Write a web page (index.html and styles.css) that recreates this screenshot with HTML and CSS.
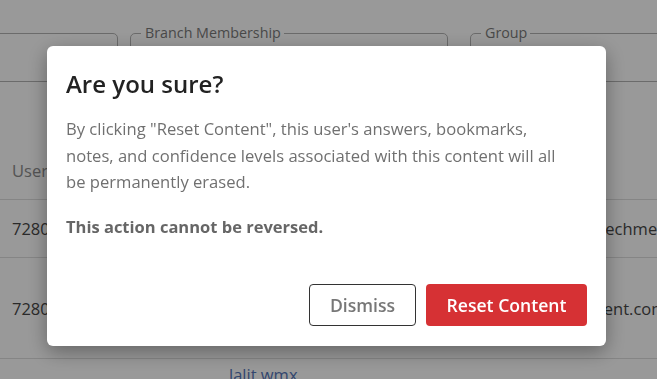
FILE: index.html
```html
<!DOCTYPE html>
<html lang="en">
<head>
    <meta charset="UTF-8">
    <meta name="viewport" content="width=device-width, initial-scale=1.0">
    <title>Reset Content</title>
    <link rel="stylesheet" href="styles.css">
</head>
<body>
    <!-- Page behind the dialog -->
    <div class="page">
        <div class="filters">
            <fieldset class="field field-first">
                <legend>Branch</legend>
            </fieldset>
            <fieldset class="field field-branch">
                <legend>Branch Membership</legend>
            </fieldset>
            <fieldset class="field field-group">
                <legend>Group</legend>
            </fieldset>
        </div>

        <table class="users">
            <tr class="head-row">
                <th class="col-id">User ID</th>
                <th class="col-name">Name</th>
                <th class="col-mail">Email</th>
            </tr>
            <tr class="row-short">
                <td class="col-id">72801</td>
                <td class="col-name">Content Admin</td>
                <td class="col-mail">content-admin1@techment.com</td>
            </tr>
            <tr class="row-tall">
                <td class="col-id">72802</td>
                <td class="col-name">Demo User</td>
                <td class="col-mail">demouser@techment.com</td>
            </tr>
            <tr class="row-last">
                <td class="col-id"></td>
                <td class="col-name"><a href="#">lalit wmx</a></td>
                <td class="col-mail"></td>
            </tr>
        </table>
    </div>

    <!-- Confirm dialog -->
    <div class="overlay">
        <div class="modal">
            <h2 class="modal-title">Are you sure?</h2>
            <p class="modal-text">By clicking "Reset Content", this user's answers, bookmarks, notes, and confidence levels associated with this content will all be permanently erased.</p>
            <p class="modal-warning">This action cannot be reversed.</p>
            <div class="modal-actions">
                <button class="dismiss-btn">Dismiss</button>
                <button class="reset-btn">Reset Content</button>
            </div>
        </div>
    </div>
</body>
</html>
```

FILE: styles.css
```css
body {
    margin: 0;
    height: 379px;
    overflow: hidden;
    font-family: "Open Sans", Arial, sans-serif;
    background-color: #ffffff;
}

.page {
    padding-top: 25px;
}

.filters {
    display: flex;
    margin-left: -100px;
}

.field {
    flex-shrink: 0;
    margin: 0;
    padding: 0;
    height: 55px;
    border: 1px solid #b3b3b3;
    border-radius: 5px;
}

.field legend {
    margin-left: 10px;
    padding: 0 3px 0 4px;
    font-size: 14.3px;
    line-height: 16px;
    color: #7a7a7a;
}

.field-first {
    width: 216px;
}

.field-branch {
    width: 316px;
    margin-left: 12px;
}

.field-group {
    width: 300px;
    margin-left: 22px;
}

.users {
    margin-top: 59px;
    width: 800px;
    table-layout: fixed;
    border-collapse: collapse;
    font-size: 16.5px;
    color: #474747;
}

.users th {
    text-align: left;
    font-weight: 400;
    color: #8c8c8c;
    height: 58px;
}

.users td,
.users th {
    padding: 0 0 0 12px;
    border-bottom: 1px solid #dedede;
    white-space: nowrap;
    overflow: hidden;
}

.users .col-mail {
    padding-left: 14px;
}

.row-short td {
    height: 57px;
}

.row-tall td {
    height: 100px;
}

.row-last td {
    border-bottom: none;
    vertical-align: top;
    padding-top: 4px;
}

.col-id {
    width: 205px;
}

.col-name {
    width: 219px;
}

.users a {
    color: #5475b8;
    text-decoration: none;
}

.overlay {
    position: fixed;
    top: 0;
    left: 0;
    width: 100%;
    height: 100%;
    background: rgba(0, 0, 0, 0.4);
}

.modal {
    margin: 46px 0 0 47px;
    width: 559px;
    height: 300px;
    box-sizing: border-box;
    padding: 20px 19px;
    display: flex;
    flex-direction: column;
    background-color: #ffffff;
    border-radius: 6px;
    box-shadow: 0 6px 20px rgba(0, 0, 0, 0.35);
}

.modal-title {
    margin: 0;
    font-size: 24px;
    font-weight: 600;
    line-height: 36px;
    color: #222222;
}

.modal-text {
    margin: 14px 0 0;
    max-width: 505px;
    font-size: 16.6px;
    line-height: 26.5px;
    color: #707070;
}

.modal-warning {
    margin: 18px 0 0;
    font-size: 16.5px;
    font-weight: 700;
    line-height: 26px;
    color: #666666;
}

.modal-actions {
    margin-top: auto;
    display: flex;
    justify-content: flex-end;
    gap: 10px;
}

button {
    height: 42px;
    box-sizing: border-box;
    font-family: "Open Sans", Arial, sans-serif;
    font-size: 17.6px;
    font-weight: 600;
    border-radius: 4px;
    cursor: pointer;
}

.dismiss-btn {
    width: 107px;
    background-color: #ffffff;
    color: #777777;
    border: 1px solid #333333;
}

.reset-btn {
    width: 161px;
    background-color: #d63134;
    color: #ffffff;
    border: none;
}
```
